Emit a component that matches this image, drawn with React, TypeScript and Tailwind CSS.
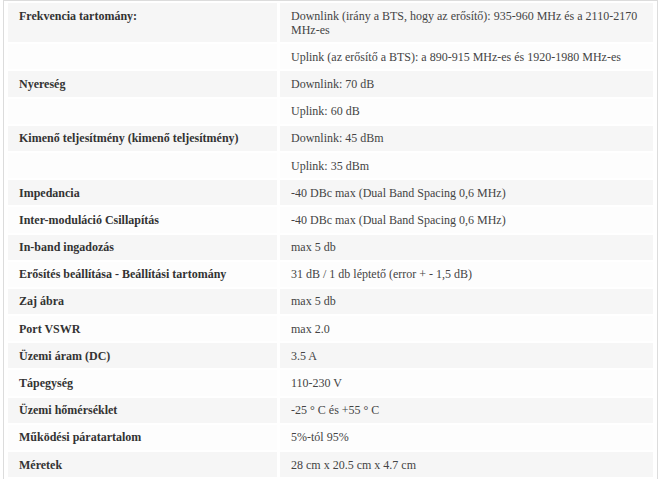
const rows: [string, string][] = [
  ["Frekvencia tartomány:", "Downlink (irány a BTS, hogy az erősítő): 935-960 MHz és a 2110-2170 MHz-es"],
  ["", "Uplink (az erősítő a BTS): a 890-915 MHz-es és 1920-1980 MHz-es"],
  ["Nyereség", "Downlink: 70 dB"],
  ["", "Uplink: 60 dB"],
  ["Kimenő teljesítmény (kimenő teljesítmény)", "Downlink: 45 dBm"],
  ["", "Uplink: 35 dBm"],
  ["Impedancia", "-40 DBc max (Dual Band Spacing 0,6 MHz)"],
  ["Inter-moduláció Csillapítás", "-40 DBc max (Dual Band Spacing 0,6 MHz)"],
  ["In-band ingadozás", "max 5 db"],
  ["Erősítés beállítása - Beállítási tartomány", "31 dB / 1 db léptető (error + - 1,5 dB)"],
  ["Zaj ábra", "max 5 db"],
  ["Port VSWR", "max 2.0"],
  ["Üzemi áram (DC)", "3.5 A"],
  ["Tápegység", "110-230 V"],
  ["Üzemi hőmérséklet", "-25 ° C és +55 ° C"],
  ["Működési páratartalom", "5%-tól 95%"],
  ["Méretek", "28 cm x 20.5 cm x 4.7 cm"],
];

export default function App() {
  return (
    <div className="h-[484px] w-[660px] overflow-hidden bg-white pl-[3px] font-['Liberation_Serif',serif]">
      <div className="w-[655px] border border-b-0 border-[#dcdcdc] px-[1px]">
        <table className="w-full border-separate border-spacing-x-[3px] border-spacing-y-[2px] text-[12px] leading-[14px]">
          <tbody>
            {rows.map(([label, value], i) => (
              <tr key={i} className={i % 2 === 0 ? "bg-[#f6f6f6]" : "bg-[#fdfdfd]"}>
                <td className="w-[269px] px-[11px] py-[5.6px] align-top font-bold text-[#333]">{label}</td>
                <td className="px-[11px] py-[5.6px] align-top text-[#444]">{value}</td>
              </tr>
            ))}
          </tbody>
        </table>
      </div>
    </div>
  );
}
